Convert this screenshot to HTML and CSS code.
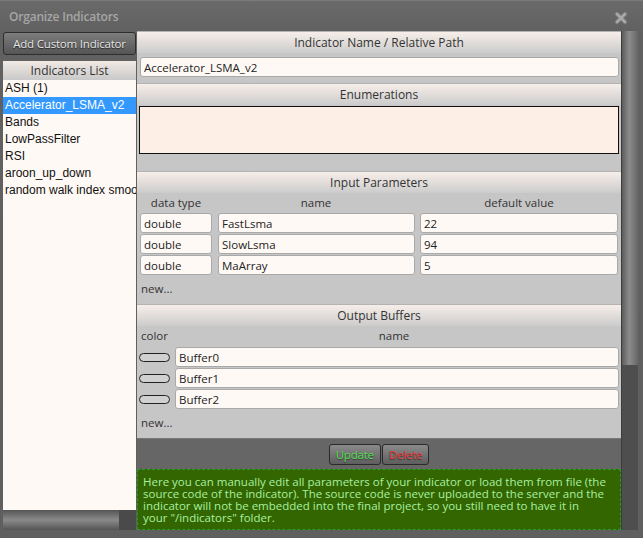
FILE: index.html
```html
<!DOCTYPE html>
<html lang="en">
<head>
    <meta charset="UTF-8">
    <title>Organize Indicators</title>
    <link rel="stylesheet" href="styles.css">
</head>
<body>
    <div class="window">
        <div class="titlebar">
            <span class="title">Organize Indicators</span>
            <svg class="close" width="14" height="14" viewBox="0 0 14 14">
                <path d="M3 3 L11 11 M11 3 L3 11" stroke="#7a7a7a" stroke-width="4.5" stroke-linecap="round"/>
                <path d="M3 3 L11 11 M11 3 L3 11" stroke="#a9a9a9" stroke-width="2.5" stroke-linecap="round"/>
            </svg>
        </div>
        <div class="main">
            <div class="sidebar">
                <button class="add-btn">Add Custom Indicator</button>
                <div class="list-panel">
                    <div class="list-head">Indicators List</div>
                    <ul class="ind-list">
                        <li>ASH (1)</li>
                        <li class="selected">Accelerator_LSMA_v2</li>
                        <li>Bands</li>
                        <li>LowPassFilter</li>
                        <li>RSI</li>
                        <li>aroon_up_down</li>
                        <li>random walk index smoothed</li>
                    </ul>
                </div>
                <div class="hscroll"><div class="hthumb"></div></div>
            </div>

            <div class="editor">
                <div class="section">
                    <div class="sec-head">Indicator Name / Relative Path</div>
                    <input class="field name-field" type="text" value="Accelerator_LSMA_v2">
                </div>

                <div class="section">
                    <div class="sec-head">Enumerations</div>
                    <textarea class="enums"></textarea>
                </div>

                <div class="section">
                    <div class="sec-head">Input Parameters</div>
                    <div class="params">
                        <div class="col-head">data type</div>
                        <div class="col-head">name</div>
                        <div class="col-head">default value</div>

                        <input class="field" value="double">
                        <input class="field" value="FastLsma">
                        <input class="field" value="22">

                        <input class="field" value="double">
                        <input class="field" value="SlowLsma">
                        <input class="field" value="94">

                        <input class="field" value="double">
                        <input class="field" value="MaArray">
                        <input class="field" value="5">
                    </div>
                    <div class="new-link">new...</div>
                </div>

                <div class="section">
                    <div class="sec-head">Output Buffers</div>
                    <div class="buffers">
                        <div class="col-head left">color</div>
                        <div class="col-head">name</div>

                        <span class="swatch"></span>
                        <input class="field" value="Buffer0">

                        <span class="swatch"></span>
                        <input class="field" value="Buffer1">

                        <span class="swatch"></span>
                        <input class="field" value="Buffer2">
                    </div>
                    <div class="new-link">new...</div>
                </div>

                <div class="actions">
                    <button class="act update">Update</button>
                    <button class="act delete">Delete</button>
                </div>

                <div class="help">
                    <span class="line">Here you can manually edit all parameters of your indicator or load them from file (the</span>
                    <span class="line">source code of the indicator). The source code is never uploaded to the server and the</span>
                    <span class="line">indicator will not be embedded into the final project, so you still need to have it in</span>
                    <span class="line">your "/indicators" folder.</span>
                </div>
            </div>

            <div class="vscroll"><div class="vthumb"></div></div>
        </div>
    </div>
</body>
</html>
```

FILE: styles.css
```css
body {
    margin: 0;
    padding: 0;
    background-color: #5d5d5d;
    font-family: 'Open Sans', sans-serif;
    font-size: 11px;
    color: #333;
}
.window {
    width: 643px;
    height: 538px;
    box-sizing: border-box;
    background: linear-gradient(#6a6a6a, #616161 30px, #5f5f5f);
    border-top: 1px solid #7a7a7a;
    overflow: hidden;
}
.titlebar {
    height: 30px;
    display: flex;
    align-items: center;
    justify-content: space-between;
    padding: 0 15px 0 9px;
}
.title {
    color: #a6a6a6;
    font-size: 12px;
    font-weight: 600;
    letter-spacing: -0.2px;
    margin-top: 1px;
}
.close {
    margin-top: 3px;
}
.main {
    display: flex;
    height: 499px;
    padding-left: 3px;
}
.sidebar {
    width: 133px;
    display: flex;
    flex-direction: column;
    margin-right: 1px;
}
.add-btn {
    height: 23px;
    margin-top: 1px;
    background: linear-gradient(#7d7d7d, #555);
    border: 1px solid #2e2e2e;
    border-radius: 3px;
    color: #e6e6e6;
    font-family: 'Open Sans', sans-serif;
    font-size: 11.5px;
    letter-spacing: -0.2px;
    text-shadow: 0 1px 1px #222;
    padding: 0;
}
.list-panel {
    margin-top: 6px;
    flex: 1;
    background: #fff9f5;
}
.list-head {
    height: 19px;
    line-height: 19px;
    text-align: center;
    font-size: 12px;
    background: linear-gradient(#f1e9e4, #c9c9c9);
}
.ind-list {
    list-style: none;
    margin: 0;
    padding: 0;
    font-family: 'Liberation Sans', Arial, sans-serif;
    font-size: 12px;
    color: #111;
}
.ind-list li {
    height: 17px;
    line-height: 17px;
    padding-left: 2px;
    white-space: nowrap;
    overflow: hidden;
}
.ind-list li.selected {
    background: #3399ff;
    color: #fff;
}
.hscroll {
    height: 20px;
    background: #4a4a4a;
    display: flex;
}
.hthumb {
    width: 116px;
    background: linear-gradient(#555, #8a8a8a 50%, #555);
}
.editor {
    width: 484px;
    background: #c6c6c6;
    overflow: hidden;
    display: flex;
    flex-direction: column;
}
.section {
    display: flex;
    flex-direction: column;
    border-top: 1px solid #b3b3b3;
}
.sec-head {
    height: 21px;
    line-height: 21px;
    text-align: center;
    font-size: 12px;
    color: #333;
    background: linear-gradient(#f7eee9, #ccc);
}
.field {
    height: 20px;
    box-sizing: border-box;
    border: 1px solid #a9a9a9;
    border-radius: 3px;
    background: #fff9f5;
    font-family: 'Open Sans', sans-serif;
    font-size: 11.5px;
    color: #222;
    padding: 0 3px;
    margin: 0;
    min-width: 0;
}
.name-field {
    margin: 4px 2px 6px 3px;
}
.enums {
    height: 48px;
    box-sizing: border-box;
    margin: 1px 2px 17px 2px;
    border: 1px solid #111;
    background: #fdeee6;
    resize: none;
}
.params {
    display: grid;
    grid-template-columns: 72px 198px 198px;
    column-gap: 5px;
    row-gap: 1px;
    padding: 0 2px 0 3px;
}
.params .field:nth-child(3n+2) {
    margin-left: 1px;
}
.col-head {
    text-align: center;
    height: 19px;
    line-height: 19px;
    font-size: 11.5px;
    color: #333;
}
.col-head.left {
    text-align: left;
}
.new-link {
    padding: 6px 0 0 4px;
    height: 23px;
    font-size: 11.5px;
    color: #333;
}
.buffers {
    display: grid;
    grid-template-columns: 31px 1fr;
    column-gap: 5px;
    row-gap: 1px;
    padding: 0 2px 0 2px;
    align-items: center;
}
.buffers .col-head {
    height: 20px;
    line-height: 20px;
    padding-left: 2px;
}
.buffers .col-head:nth-child(2) {
    margin-left: -8px;
}
.swatch {
    width: 29px;
    height: 7px;
    border: 1px solid #222;
    border-radius: 5px;
    background: #d0d0d0;
}
.actions {
    background: #666;
    border-top: 1px solid #777;
    height: 30px;
    display: flex;
    justify-content: center;
    align-items: center;
    gap: 1px;
}
.act {
    height: 21px;
    padding: 0 6px;
    background: linear-gradient(#8a8a8a, #5e5e5e);
    border: 1px solid #2a2a2a;
    border-radius: 3px;
    font-family: 'Open Sans', sans-serif;
    font-size: 11.5px;
    letter-spacing: -0.2px;
    text-shadow: 0 1px 1px #333;
}
.update {
    color: #55e055;
}
.delete {
    color: #f03a3a;
}
.help {
    flex: 1;
    background: #336600;
    border: 1px dashed #2a9a2a;
    color: #a8f0a0;
    font-size: 11.5px;
    line-height: 12px;
    padding: 6px 2px 0 5px;
}
.help .line {
    display: block;
    white-space: nowrap;
}
.vscroll {
    width: 16px;
    background: #4e4e4e;
    border-left: 1px solid #3c3c3c;
}
.vthumb {
    height: 334px;
    background: linear-gradient(90deg, #5c5c5c, #8c8c8c 45%, #666);
}
```
